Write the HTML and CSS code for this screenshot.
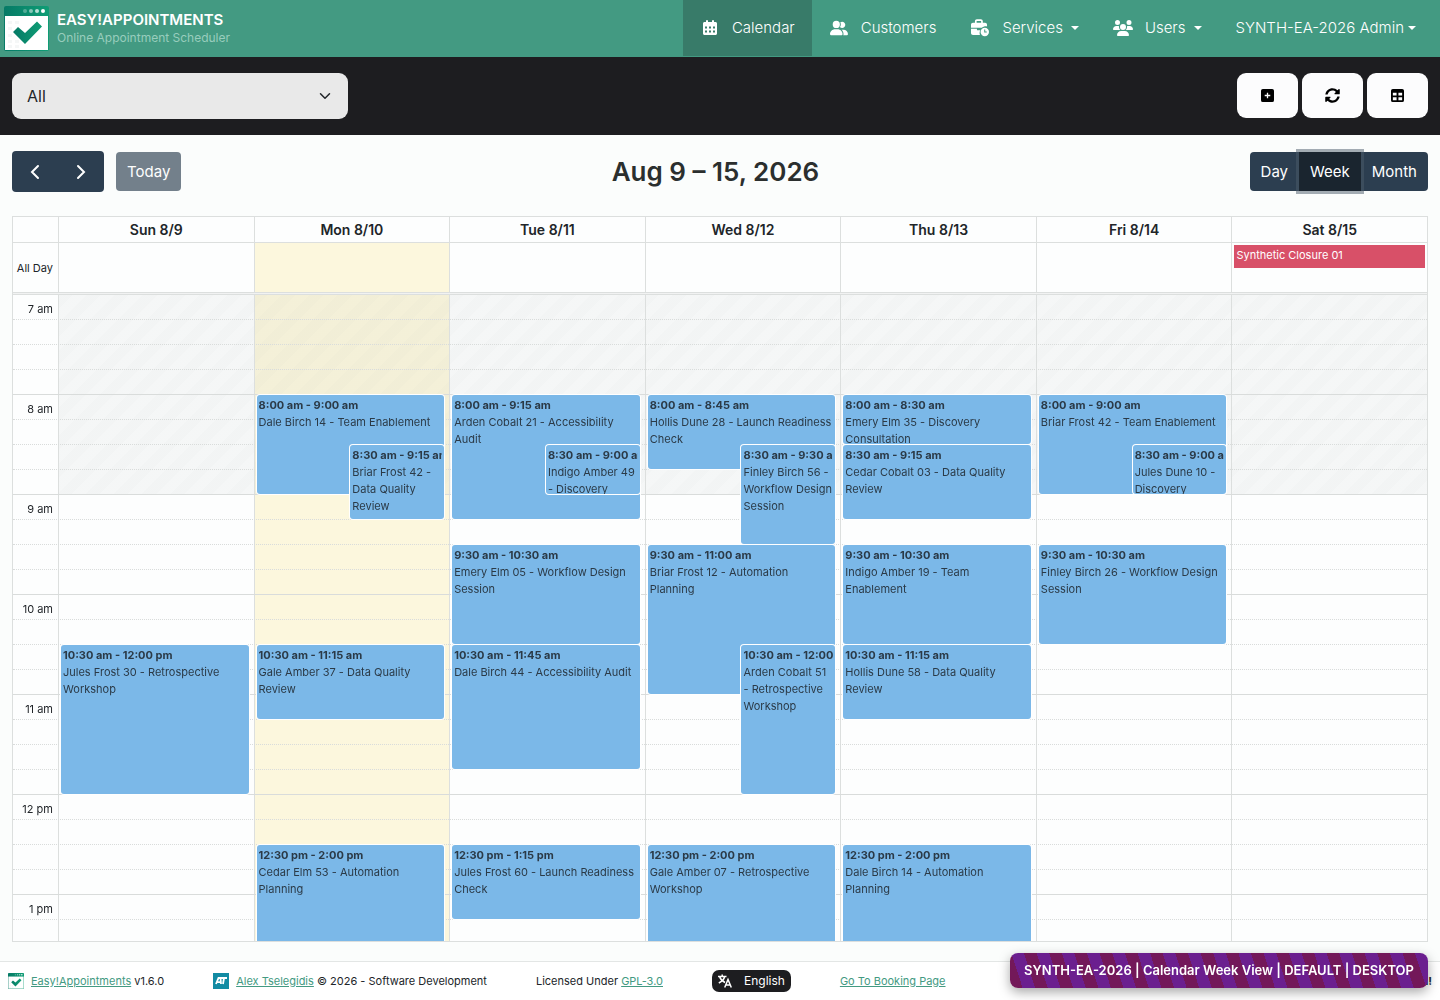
FILE: index.html
```html
<!DOCTYPE html>
<html lang="en">

<head>
  <meta charset="UTF-8" />
  <meta name="viewport" content="width=device-width, initial-scale=1.0" />
  <title>Calendar | Easy!Appointments</title>
  <link rel="stylesheet" href="styles.css">
</head>

<body>
  <!-- Shared icons -->
  <svg class="icon-defs" aria-hidden="true">
    <defs>
      <linearGradient id="logo-green" x1="0" y1="0" x2="1" y2="0">
        <stop offset="0" stop-color="#067a66" />
        <stop offset="1" stop-color="#0f9d75" />
      </linearGradient>
      <symbol id="ea-logo" viewBox="0 0 45 45">
        <rect width="45" height="45" rx="2" fill="url(#logo-green)" />
        <rect x="1" y="10" width="43" height="34" fill="#fff" />
        <path d="M4 15h4v3H4zM11 15h4v3h-4zM4 21h4v3H4zM4 28h4v3H4zM4 34h4v3H4zM11 34h4v3h-4zM4 39h4v3H4zM11 39h4v3h-4z" fill="#f5f7f7" />
        <circle cx="21" cy="5" r="2" fill="#fff" opacity=".3" />
        <circle cx="27" cy="5" r="2" fill="#fff" opacity=".5" />
        <circle cx="33" cy="5" r="2" fill="#fff" opacity=".7" />
        <circle cx="39" cy="5" r="2" fill="#fff" />
        <path d="M9 26l5-5 7 6L33 15.500l5 5L21 38z" fill="url(#logo-green)" />
      </symbol>
    </defs>
  </svg>

  <header class="header">
    <a class="brand" href="#">
      <svg class="brand-logo" aria-hidden="true"><use href="#ea-logo" /></svg>
      <span class="brand-text">
        <strong>EASY!APPOINTMENTS</strong>
        <small>Online Appointment Scheduler</small>
      </span>
    </a>
    <nav class="menu">
      <a class="menu-item active" href="#">
        <span class="menu-icon"><svg width="14" height="16" viewBox="0 0 448 512"><path fill="currentColor" fill-rule="evenodd" d="M96 32a32 32 0 0 1 64 0v32h128V32a32 32 0 0 1 64 0v32h48c26 0 48 22 48 48v320c0 26-22 48-48 48H48c-26 0-48-22-48-48V112c0-26 22-48 48-48h48zM64 208v64h64v-64zM192 208v64h64v-64zM320 208v64h64v-64zM64 336v64h64v-64zM192 336v64h64v-64zM320 336v64h64v-64z" /></svg></span>
        Calendar
      </a>
      <a class="menu-item" href="#">
        <span class="menu-icon"><svg width="18" height="16" viewBox="0 0 640 512"><path fill="currentColor" d="M96 128a128 128 0 1 1 256 0A128 128 0 1 1 96 128zM0 482.3C0 383.8 79.8 304 178.3 304h91.4C368.2 304 448 383.8 448 482.3c0 16.4-13.3 29.7-29.7 29.7H29.7C13.3 512 0 498.7 0 482.3zM609.3 512H471.4c5.4-9.4 8.6-20.3 8.6-32v-8c0-60.7-27.1-115.2-69.8-151.8c2.4-.1 4.7-.2 7.1-.2h61.4C567.8 320 640 392.2 640 481.3c0 17-13.8 30.7-30.7 30.7zM432 256c-31 0-59-12.6-79.3-32.9C372.4 196.5 384 163.6 384 128c0-26.8-6.6-52.1-18.3-74.3C384.3 40.1 407.2 32 432 32c61.9 0 112 50.1 112 112s-50.1 112-112 112z" /></svg></span>
        Customers
      </a>
      <a class="menu-item" href="#">
        <span class="menu-icon"><svg width="18" height="18" viewBox="0 0 640 640"><path fill="currentColor" fill-rule="evenodd" d="M210 70h140c6 0 10 4 10 10v50H200V80c0-6 4-10 10-10zM140 80v50H70c-39 0-70 31-70 70v110h390c50-40 110-60 180-45V200c0-39-31-70-70-70h-80V80c0-39-31-70-70-70H210c-39 0-70 31-70 70zM330 400H240c-20 0-30-10-30-30v-20H0v150c0 39 31 70 70 70h250c-20-50-20-110 10-170z" /><path fill="currentColor" fill-rule="evenodd" d="M640 460a150 150 0 1 1-300 0 150 150 0 1 1 300 0zM470 370v110h90v-36h-54v-74z" /></svg></span>
        Services
        <span class="caret"></span>
      </a>
      <a class="menu-item" href="#">
        <span class="menu-icon"><svg width="20" height="16" viewBox="0 0 640 512"><path fill="currentColor" d="M144 0a80 80 0 1 1 0 160A80 80 0 1 1 144 0zM512 0a80 80 0 1 1 0 160A80 80 0 1 1 512 0zM0 298.7C0 239.8 47.8 192 106.7 192h42.7c15.9 0 31 3.5 44.6 9.7c-1.3 7.2-1.9 14.7-1.9 22.3c0 38.2 16.8 72.5 43.3 96H21.3C9.6 320 0 310.4 0 298.7zM405.3 320c26.6-23.5 43.3-57.8 43.3-96c0-7.6-.7-15-1.9-22.3c13.6-6.3 28.7-9.7 44.6-9.7h42.7C592.2 192 640 239.8 640 298.7c0 11.8-9.6 21.3-21.3 21.3H405.3zM224 224a96 96 0 1 1 192 0 96 96 0 1 1-192 0zM128 485.3C128 411.7 187.7 352 261.3 352H378.7C452.3 352 512 411.7 512 485.3c0 14.7-11.9 26.7-26.7 26.7H154.7c-14.7 0-26.7-11.9-26.7-26.7z" /></svg></span>
        Users
        <span class="caret"></span>
      </a>
      <a class="menu-item" href="#">SYNTH-EA-2026 Admin<span class="caret caret-tight"></span></a>
    </nav>
  </header>

  <div class="filter-bar">
    <select class="filter-select" aria-label="Filter">
      <option>All</option>
    </select>
    <div class="filter-actions">
      <button class="action-btn" type="button" aria-label="Add"><svg width="13" height="13" viewBox="0 0 14 14"><path fill="#000" fill-rule="evenodd" d="M2 0h10a2 2 0 0 1 2 2v10a2 2 0 0 1-2 2H2a2 2 0 0 1-2-2V2a2 2 0 0 1 2-2zM6.300 4v2.300H4v1.400h2.300V10h1.400V7.700H10V6.300H7.700V4z" /></svg></button>
      <button class="action-btn" type="button" aria-label="Reload"><svg width="15" height="15" viewBox="0 0 512 512"><path fill="#000" d="M370.720 133.280C339.458 104.008 298.888 87.962 255.848 88c-77.458.068-144.328 53.178-162.791 126.850-1.344 5.363-6.122 9.150-11.651 9.150H24.103c-7.498 0-13.194-6.807-11.807-14.176C33.933 94.924 134.813 8 256 8c66.448 0 126.791 26.136 171.315 68.685L463.030 40.970C478.149 25.851 504 36.559 504 57.941V192c0 13.255-10.745 24-24 24H345.941c-21.382 0-32.090-25.851-16.971-40.971l41.750-41.749zM32 296h134.059c21.382 0 32.090 25.851 16.971 40.971l-41.750 41.750c31.262 29.273 71.835 45.319 114.876 45.280 77.418-.07 144.315-53.144 162.787-126.849 1.344-5.363 6.122-9.150 11.651-9.150h57.304c7.498 0 13.194 6.807 11.807 14.176C478.067 417.076 377.187 504 256 504c-66.448 0-126.791-26.136-171.315-68.685L48.970 471.030C33.851 486.149 8 475.441 8 454.059V320c0-13.255 10.745-24 24-24z" /></svg></button>
      <button class="action-btn" type="button" aria-label="Table view"><svg width="13" height="13" viewBox="0 0 14 14"><path fill="#000" fill-rule="evenodd" d="M2 0h10a2 2 0 0 1 2 2v10a2 2 0 0 1-2 2H2a2 2 0 0 1-2-2V2a2 2 0 0 1 2-2zM2 4v3h4V4zM8 4v3h4V4zM2 9v3h4V9zM8 9v3h4V9z" /></svg></button>
    </div>
  </div>

  <main class="calendar">
    <div class="toolbar">
      <div class="toolbar-group">
        <div class="btn-group">
          <button class="btn btn-arrow" type="button" aria-label="Previous week"><svg width="24" height="24" viewBox="0 0 24 24"><path d="M15 6l-6 6 6 6" /></svg></button>
          <button class="btn btn-arrow" type="button" aria-label="Next week"><svg width="24" height="24" viewBox="0 0 24 24"><path d="M9 6l6 6-6 6" /></svg></button>
        </div>
        <button class="btn" type="button" disabled>Today</button>
      </div>
      <h2 class="title">Aug 9 – 15, 2026</h2>
      <div class="btn-group">
        <button class="btn" type="button">Day</button>
        <button class="btn active" type="button">Week</button>
        <button class="btn" type="button">Month</button>
      </div>
    </div>

    <div class="week">
      <div class="week-row head">
        <div></div>
        <div class="cell">Sun 8/9</div>
        <div class="cell">Mon 8/10</div>
        <div class="cell">Tue 8/11</div>
        <div class="cell">Wed 8/12</div>
        <div class="cell">Thu 8/13</div>
        <div class="cell">Fri 8/14</div>
        <div class="cell">Sat 8/15</div>
      </div>
      <div class="week-row all-day">
        <div class="axis-label">All Day</div>
        <div class="cell"></div>
        <div class="cell today"></div>
        <div class="cell"></div>
        <div class="cell"></div>
        <div class="cell"></div>
        <div class="cell"></div>
        <div class="cell">
          <div class="closure">Synthetic Closure 01</div>
        </div>
      </div>
      <div class="divider"></div>

      <div class="time-grid">
        <div class="slots">
          <div class="hour"><div class="slot"><span class="slot-label">7 am</span></div><div class="slot"></div><div class="slot"></div><div class="slot"></div></div>
          <div class="hour"><div class="slot"><span class="slot-label">8 am</span></div><div class="slot"></div><div class="slot"></div><div class="slot"></div></div>
          <div class="hour"><div class="slot"><span class="slot-label">9 am</span></div><div class="slot"></div><div class="slot"></div><div class="slot"></div></div>
          <div class="hour"><div class="slot"><span class="slot-label">10 am</span></div><div class="slot"></div><div class="slot"></div><div class="slot"></div></div>
          <div class="hour"><div class="slot"><span class="slot-label">11 am</span></div><div class="slot"></div><div class="slot"></div><div class="slot"></div></div>
          <div class="hour"><div class="slot"><span class="slot-label">12 pm</span></div><div class="slot"></div><div class="slot"></div><div class="slot"></div></div>
          <div class="hour"><div class="slot"><span class="slot-label">1 pm</span></div><div class="slot"></div><div class="slot"></div><div class="slot"></div></div>
        </div>

        <!-- One column per day, --from / --to are quarter-hour lines counted from 7 am -->
        <div class="days">
          <div class="axis-space"></div>
          <div class="day">
            <div class="closed"></div>
            <div class="event" style="--from: 15; --to: 21"><b>10:30 am - 12:00 pm</b><span>Jules Frost 30 - Retrospective Workshop</span></div>
          </div>
          <div class="day today">
            <div class="closed"></div>
            <div class="event" style="--from: 5; --to: 9"><b>8:00 am - 9:00 am</b><span>Dale Birch 14 - Team Enablement</span></div>
            <div class="event half" style="--from: 7; --to: 10"><b>8:30 am - 9:15 am</b><span>Briar Frost 42 - Data Quality Review</span></div>
            <div class="event" style="--from: 15; --to: 18"><b>10:30 am - 11:15 am</b><span>Gale Amber 37 - Data Quality Review</span></div>
            <div class="event" style="--from: 23; --to: 29"><b>12:30 pm - 2:00 pm</b><span>Cedar Elm 53 - Automation Planning</span></div>
          </div>
          <div class="day">
            <div class="closed"></div>
            <div class="event" style="--from: 5; --to: 10"><b>8:00 am - 9:15 am</b><span>Arden Cobalt 21 - Accessibility Audit</span></div>
            <div class="event half" style="--from: 7; --to: 9"><b>8:30 am - 9:00 am</b><span>Indigo Amber 49 - Discovery Consultation</span></div>
            <div class="event" style="--from: 11; --to: 15"><b>9:30 am - 10:30 am</b><span>Emery Elm 05 - Workflow Design Session</span></div>
            <div class="event" style="--from: 15; --to: 20"><b>10:30 am - 11:45 am</b><span>Dale Birch 44 - Accessibility Audit</span></div>
            <div class="event" style="--from: 23; --to: 26"><b>12:30 pm - 1:15 pm</b><span>Jules Frost 60 - Launch Readiness Check</span></div>
          </div>
          <div class="day">
            <div class="closed"></div>
            <div class="event" style="--from: 5; --to: 8"><b>8:00 am - 8:45 am</b><span>Hollis Dune 28 - Launch Readiness Check</span></div>
            <div class="event half" style="--from: 7; --to: 11"><b>8:30 am - 9:30 am</b><span>Finley Birch 56 - Workflow Design Session</span></div>
            <div class="event" style="--from: 11; --to: 17"><b>9:30 am - 11:00 am</b><span>Briar Frost 12 - Automation Planning</span></div>
            <div class="event half" style="--from: 15; --to: 21"><b>10:30 am - 12:00 pm</b><span>Arden Cobalt 51 - Retrospective Workshop</span></div>
            <div class="event" style="--from: 23; --to: 29"><b>12:30 pm - 2:00 pm</b><span>Gale Amber 07 - Retrospective Workshop</span></div>
          </div>
          <div class="day">
            <div class="closed"></div>
            <div class="event" style="--from: 5; --to: 7"><b>8:00 am - 8:30 am</b><span>Emery Elm 35 - Discovery Consultation</span></div>
            <div class="event" style="--from: 7; --to: 10"><b>8:30 am - 9:15 am</b><span>Cedar Cobalt 03 - Data Quality Review</span></div>
            <div class="event" style="--from: 11; --to: 15"><b>9:30 am - 10:30 am</b><span>Indigo Amber 19 - Team Enablement</span></div>
            <div class="event" style="--from: 15; --to: 18"><b>10:30 am - 11:15 am</b><span>Hollis Dune 58 - Data Quality Review</span></div>
            <div class="event" style="--from: 23; --to: 29"><b>12:30 pm - 2:00 pm</b><span>Dale Birch 14 - Automation Planning</span></div>
          </div>
          <div class="day">
            <div class="closed"></div>
            <div class="event" style="--from: 5; --to: 9"><b>8:00 am - 9:00 am</b><span>Briar Frost 42 - Team Enablement</span></div>
            <div class="event half" style="--from: 7; --to: 9"><b>8:30 am - 9:00 am</b><span>Jules Dune 10 - Discovery Consultation</span></div>
            <div class="event" style="--from: 11; --to: 15"><b>9:30 am - 10:30 am</b><span>Finley Birch 26 - Workflow Design Session</span></div>
          </div>
          <div class="day">
            <div class="closed"></div>
          </div>
        </div>
      </div>
    </div>
  </main>

  <footer class="footer">
    <div class="footer-item">
      <svg class="footer-logo" aria-hidden="true"><use href="#ea-logo" /></svg>
      <span><a href="#">Easy!Appointments</a> v1.6.0</span>
    </div>
    <div class="footer-item">
      <svg class="footer-logo" viewBox="0 0 16 16" aria-hidden="true"><rect width="16" height="16" fill="#128ba3" /><path d="M3 11l2.500-6h2l.5 6M4.500 9.200H8M7.500 5H14M11 5l-1 6" fill="none" stroke="#fff" stroke-width="1.800" /></svg>
      <span><a href="#">Alex Tselegidis</a> © 2026 - Software Development</span>
    </div>
    <div class="footer-item"><span>Licensed Under <a href="#">GPL-3.0</a></span></div>
    <button class="lang-btn" type="button">
      <svg width="14" height="14" viewBox="0 0 14 14" fill="none" stroke="#fff" stroke-width="1.500"><path d="M0 2.500h8.500M4.200.5v2M1.500 2.500c1 3 3 4.800 5.500 6M6.700 2.500C6 5.500 3.500 7.700.8 9M6.700 13.500l3.300-8 3.300 8M8 11h4.200" /></svg>
      English
    </button>
    <div class="footer-item"><a href="#">Go To Booking Page</a></div>
    <strong class="greeting">Hello, SYNTH-EA-2026 Admin!</strong>
  </footer>

  <div class="env-badge">SYNTH-EA-2026 | Calendar Week View | DEFAULT | DESKTOP</div>
</body>

</html>
```

FILE: styles.css
```css
* {
  box-sizing: border-box;
}

body {
  margin: 0;
  height: 100vh;
  display: flex;
  flex-direction: column;
  overflow: hidden;
  font-family: Inter, "Liberation Sans", sans-serif;
  font-size: 15px;
  line-height: 24px;
  color: #212529;
  background: #fbfdfc;
}

button,
select {
  font: inherit;
}

.icon-defs {
  position: absolute;
  width: 0;
  height: 0;
}

/* Header */
.header {
  flex: none;
  display: flex;
  justify-content: space-between;
  height: 57px;
  padding: 0 7px 0 4px;
  background: #439a82;
}

.brand {
  display: flex;
  align-items: center;
  gap: 8px;
  text-decoration: none;
}

.brand-logo {
  width: 45px;
  height: 45px;
}

.brand-text {
  display: flex;
  flex-direction: column;
  line-height: 18px;
}

.brand-text strong {
  font-size: 15px;
  font-weight: 600;
  color: #fff;
}

.brand-text small {
  font-size: 12px;
  color: #98cdbd;
}

.menu {
  display: flex;
  height: 56px;
}

.menu-item {
  display: flex;
  align-items: center;
  padding: 0 17px;
  font-weight: 300;
  color: #fff;
  text-decoration: none;
}

.menu-item.active {
  background: #387b69;
}

.menu-icon {
  display: flex;
  justify-content: center;
  width: 20px;
  margin-right: 12px;
}

.caret {
  margin-left: 8px;
  border: 4px solid transparent;
  border-top-color: #fff;
  border-bottom: 0;
}

.caret-tight {
  margin-left: 4px;
}

/* Filter bar */
.filter-bar {
  flex: none;
  display: flex;
  justify-content: space-between;
  align-items: flex-start;
  padding: 16px 12px;
  background: #1d1d20;
}

.filter-select {
  width: 336px;
  height: 46px;
  padding: 0 15px;
  border: 0;
  border-radius: 9px;
  font-size: 16px;
  color: #212529;
  appearance: none;
  background: #e9e9e9 url("data:image/svg+xml,%3Csvg xmlns='http://www.w3.org/2000/svg' viewBox='0 0 16 16'%3E%3Cpath fill='none' stroke='%23212529' stroke-linecap='round' stroke-linejoin='round' stroke-width='2' d='m2 5 6 6 6-6'/%3E%3C/svg%3E") no-repeat right 17px center / 12px 12px;
}

.filter-actions {
  display: flex;
  gap: 4px;
}

.action-btn {
  display: flex;
  align-items: center;
  justify-content: center;
  width: 61px;
  height: 45px;
  padding: 0;
  border: 0;
  border-radius: 9px;
  background: #fcfcfd;
}

/* Calendar toolbar */
.calendar {
  flex: 1;
  min-height: 0;
  display: flex;
  flex-direction: column;
  padding: 16px 12px 19px;
}

.toolbar {
  display: flex;
  justify-content: space-between;
  align-items: center;
  margin-bottom: 24px;
}

.toolbar-group {
  display: flex;
  align-items: center;
  gap: 12px;
}

.btn-group {
  display: flex;
}

.btn {
  height: 39px;
  padding: 0 11px;
  border: 0;
  border-radius: 4px;
  color: #fff;
  background: #2c3e50;
}

.btn:disabled {
  opacity: .65;
}

.btn.active {
  position: relative;
  background: #1a252f;
  box-shadow: 0 0 0 3px rgba(76, 91, 106, .5);
}

.btn-group .btn:not(:first-child) {
  border-top-left-radius: 0;
  border-bottom-left-radius: 0;
}

.btn-group .btn:not(:last-child) {
  border-top-right-radius: 0;
  border-bottom-right-radius: 0;
}

.btn-arrow {
  display: flex;
  align-items: center;
  height: 41px;
}

.btn-arrow svg {
  fill: none;
  stroke: #fff;
  stroke-width: 2;
  stroke-linecap: round;
}

.title {
  margin: 0;
  font-size: 26px;
  font-weight: 600;
  line-height: 40px;
  color: #2b2f2e;
}

/* Week grid */
.week {
  flex: 1;
  min-height: 0;
  display: flex;
  flex-direction: column;
  border: 1px solid #dcdfde;
  background: #fdfefe;
}

.week-row,
.days {
  display: grid;
  grid-template-columns: 45px repeat(7, minmax(0, 1fr));
}

.cell,
.day {
  border-left: 1px solid #dcdfde;
}

.head {
  flex: none;
  font-size: 14px;
  font-weight: 600;
  line-height: 25px;
  text-align: center;
  border-bottom: 1px solid #dcdfde;
}

.all-day {
  flex: none;
  height: 49px;
  font-size: 11px;
}

.axis-label {
  align-self: center;
  padding-right: 5px;
  text-align: right;
}

.today {
  background: #fcf7dd;
}

.closure {
  margin: 2px;
  padding: 0 2px;
  height: 23px;
  line-height: 20px;
  color: #fff;
  background: #d85068;
}

.divider {
  flex: none;
  height: 3px;
  border: solid #dcdfde;
  border-width: 1px 0;
  background: #f1f2f2;
}

.time-grid {
  flex: 1;
  min-height: 0;
  display: grid;
  grid-template-rows: minmax(0, 1fr);
  overflow: hidden;
}

.slots,
.days {
  grid-area: 1 / 1;
}

.slots {
  z-index: 1;
}

.slot {
  height: 25px;
  border-bottom: 1px dotted #d9dcdb;
}

.hour .slot:last-child {
  border-bottom-style: solid;
}

.slot-label {
  display: block;
  width: 45px;
  padding: 2px 5px 0 0;
  font-size: 11px;
  text-align: right;
}

.day {
  display: grid;
  grid-template-columns: repeat(2, minmax(0, 1fr));
  grid-template-rows: repeat(28, 25px);
  padding: 0 5px 0 2px;
}

.closed {
  grid-area: 1 / 1 / 9 / -1;
  margin: 0 -5px 0 -2px;
  background: repeating-linear-gradient(-45deg, rgba(150, 160, 160, .08) 0 10px, rgba(150, 160, 160, .1) 10px 20px);
}

.event {
  z-index: 2;
  grid-row: var(--from) / var(--to);
  grid-column: 1 / -1;
  margin-bottom: 1px;
  padding: 2px 2px 0;
  overflow: hidden;
  border-radius: 3px;
  font-size: 11px;
  line-height: 17px;
  color: #2b3a47;
  background: #7bb8e8;
  box-shadow: 0 0 0 1px #fff;
}

.event.half {
  grid-column: 2;
}

.event b,
.event span {
  display: block;
}

.event b {
  overflow: hidden;
  white-space: nowrap;
}

/* Footer */
.footer {
  flex: none;
  display: flex;
  align-items: center;
  gap: 49px;
  height: 39px;
  padding: 0 8px;
  border-top: 1px solid #e3e6e5;
  font-size: 11px;
  background: #fff;
}

.footer-item {
  display: flex;
  align-items: center;
  gap: 7px;
  white-space: nowrap;
}

.footer-logo {
  width: 16px;
  height: 16px;
}

.footer a {
  color: #439a82;
}

.lang-btn {
  display: flex;
  align-items: center;
  gap: 12px;
  height: 22px;
  padding: 0 6px;
  border: 0;
  border-radius: 7px;
  font-size: 12px;
  color: #fff;
  background: #1d1d20;
}

.greeting {
  margin-left: auto;
  white-space: nowrap;
}

.env-badge {
  position: fixed;
  right: 12px;
  bottom: 12px;
  padding: 8px 14px;
  border-radius: 8px;
  font-size: 13px;
  font-weight: 600;
  line-height: 19px;
  color: #fff;
  background: repeating-linear-gradient(72deg, #731859 0 12px, #6b1f8f 12px 24px);
  box-shadow: 0 4px 12px rgba(0, 0, 0, .35);
}
```
